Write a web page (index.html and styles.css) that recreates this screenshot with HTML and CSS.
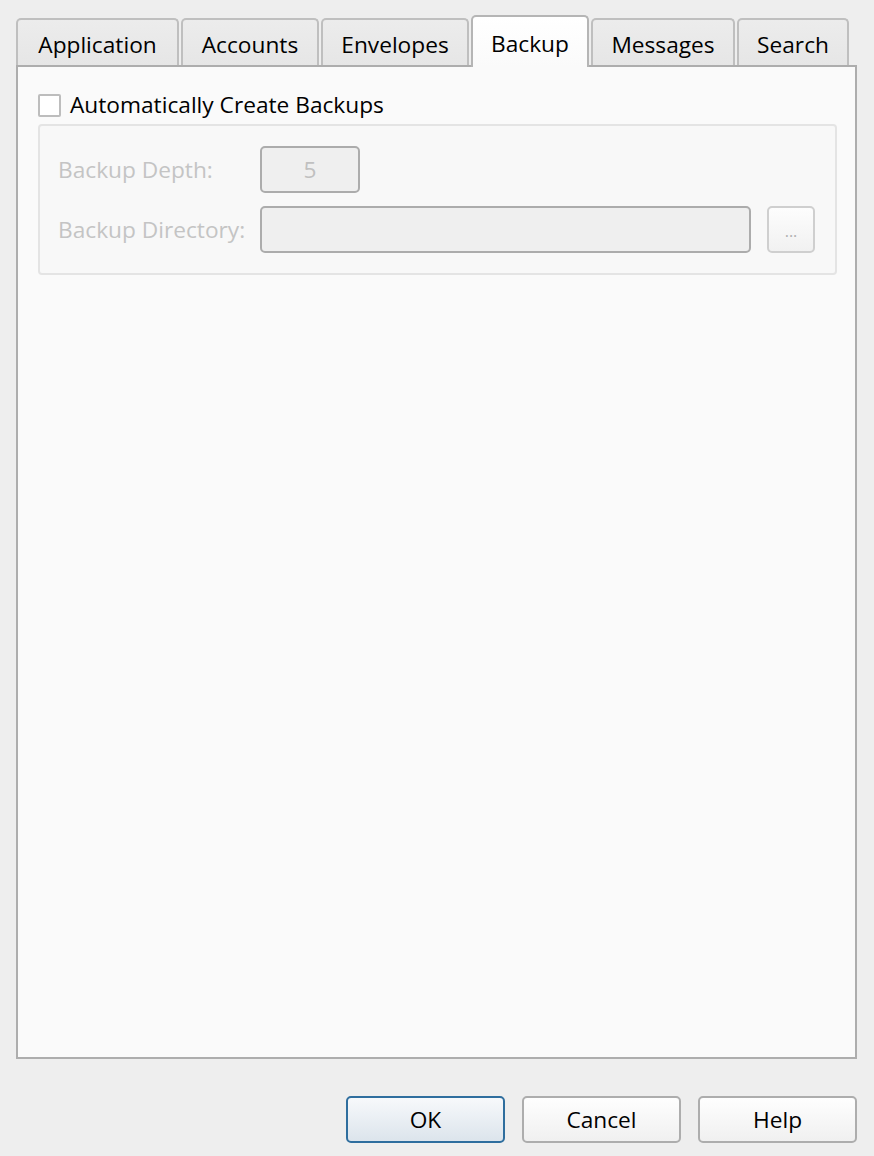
FILE: index.html
```html
<!DOCTYPE html>
<html lang="en">
<head>
<meta charset="utf-8">
<title>Preferences</title>
<link rel="stylesheet" href="styles.css">
</head>
<body>
<div class="dialog">
  <div class="tabs">
    <div class="tab tab-application">Application</div>
    <div class="tab tab-accounts">Accounts</div>
    <div class="tab tab-envelopes">Envelopes</div>
    <div class="tab tab-backup active">Backup</div>
    <div class="tab tab-messages">Messages</div>
    <div class="tab tab-search">Search</div>
  </div>
  <div class="pane">
    <label class="check-row">
      <span class="checkbox"></span>
      <span class="check-label">Automatically Create Backups</span>
    </label>
    <div class="group">
      <div class="field-label">Backup Depth:</div>
      <div class="spin">5</div>
      <div class="field-label">Backup Directory:</div>
      <div class="textfield"></div>
      <div class="browse">...</div>
    </div>
  </div>
  <div class="buttons">
    <div class="btn default">OK</div>
    <div class="btn">Cancel</div>
    <div class="btn">Help</div>
  </div>
</div>
</body>
</html>
```
FILE: styles.css
```css
html, body {
  margin: 0;
  padding: 0;
  background: #eeeeee;
}
body {
  font-family: "Open Sans", "Noto Sans", "Liberation Sans", sans-serif;
  font-size: 22.7px;
  color: #000;
  width: 874px;
  height: 1156px;
  overflow: hidden;
}
.dialog {
  padding: 16px 17px 0 16px;
}
.tabs {
  display: flex;
  align-items: flex-end;
  gap: 2px;
  height: 49px;
  position: relative;
  z-index: 1;
}
.tab {
  box-sizing: border-box;
  height: 47px;
  padding-top: 10px;
  border: 2px solid #bfbfbf;
  border-bottom: none;
  border-radius: 5px 5px 0 0;
  background: linear-gradient(#ececec, #e6e6e6);
  line-height: 30px;
  text-align: center;
  white-space: nowrap;
}
.tab-application { width: 163px; }
.tab-accounts { width: 138px; }
.tab-envelopes { width: 148px; }
.tab-backup { width: 118px; }
.tab-messages { width: 144px; }
.tab-search { width: 112px; }
.tab.active {
  height: 52px;
  margin-bottom: -2px;
  padding-top: 12px;
  border-color: #b5b5b5;
  background: linear-gradient(#ffffff, #fafafa);
}
.pane {
  box-sizing: border-box;
  height: 994px;
  border: 2px solid #adadad;
  background: #fafafa;
  padding: 25px 18px 0 20px;
}
.check-row {
  display: flex;
  align-items: center;
  gap: 9px;
  height: 26px;
}
.checkbox {
  box-sizing: border-box;
  width: 23px;
  height: 23px;
  border: 2px solid #bdbdbd;
  border-radius: 2px;
  background: #ffffff;
}
.check-label {
  line-height: 26px;
}
.group {
  margin-top: 6px;
  box-sizing: border-box;
  border: 2px solid #e4e4e4;
  border-radius: 4px;
  background: #f8f8f8;
  padding: 20px 20px 20px 18px;
  display: grid;
  grid-template-columns: 186px 1fr 48px;
  column-gap: 16px;
  row-gap: 13px;
  align-items: center;
}
.field-label {
  color: #c4c4c4;
  white-space: nowrap;
  grid-column: 1;
}
.spin {
  grid-column: 2;
  justify-self: start;
  box-sizing: border-box;
  width: 100px;
  height: 47px;
  border: 2px solid #acacac;
  border-radius: 5px;
  background: #efefef;
  color: #c0c0c0;
  display: flex;
  align-items: center;
  justify-content: center;
}
.textfield {
  grid-column: 2;
  box-sizing: border-box;
  height: 47px;
  border: 2px solid #acacac;
  border-radius: 5px;
  background: #efefef;
}
.browse {
  grid-column: 3;
  box-sizing: border-box;
  height: 47px;
  border: 2px solid #cfcfcf;
  border-radius: 5px;
  background: linear-gradient(#fdfdfd, #f1f1f1);
  color: #b0b0b0;
  font-size: 16px;
  line-height: 16px;
  display: flex;
  align-items: flex-end;
  justify-content: center;
  padding-bottom: 12px;
}
.buttons {
  display: flex;
  justify-content: flex-end;
  gap: 17px;
  margin-top: 37px;
}
.btn {
  box-sizing: border-box;
  width: 159px;
  height: 47px;
  border: 2px solid #adadad;
  border-radius: 5px;
  background: linear-gradient(#fefefe, #f0f0f0);
  display: flex;
  align-items: center;
  justify-content: center;
}
.btn.default {
  border-color: #2f6e9e;
  background: linear-gradient(#f7f9fb, #dce4ec);
}
```
